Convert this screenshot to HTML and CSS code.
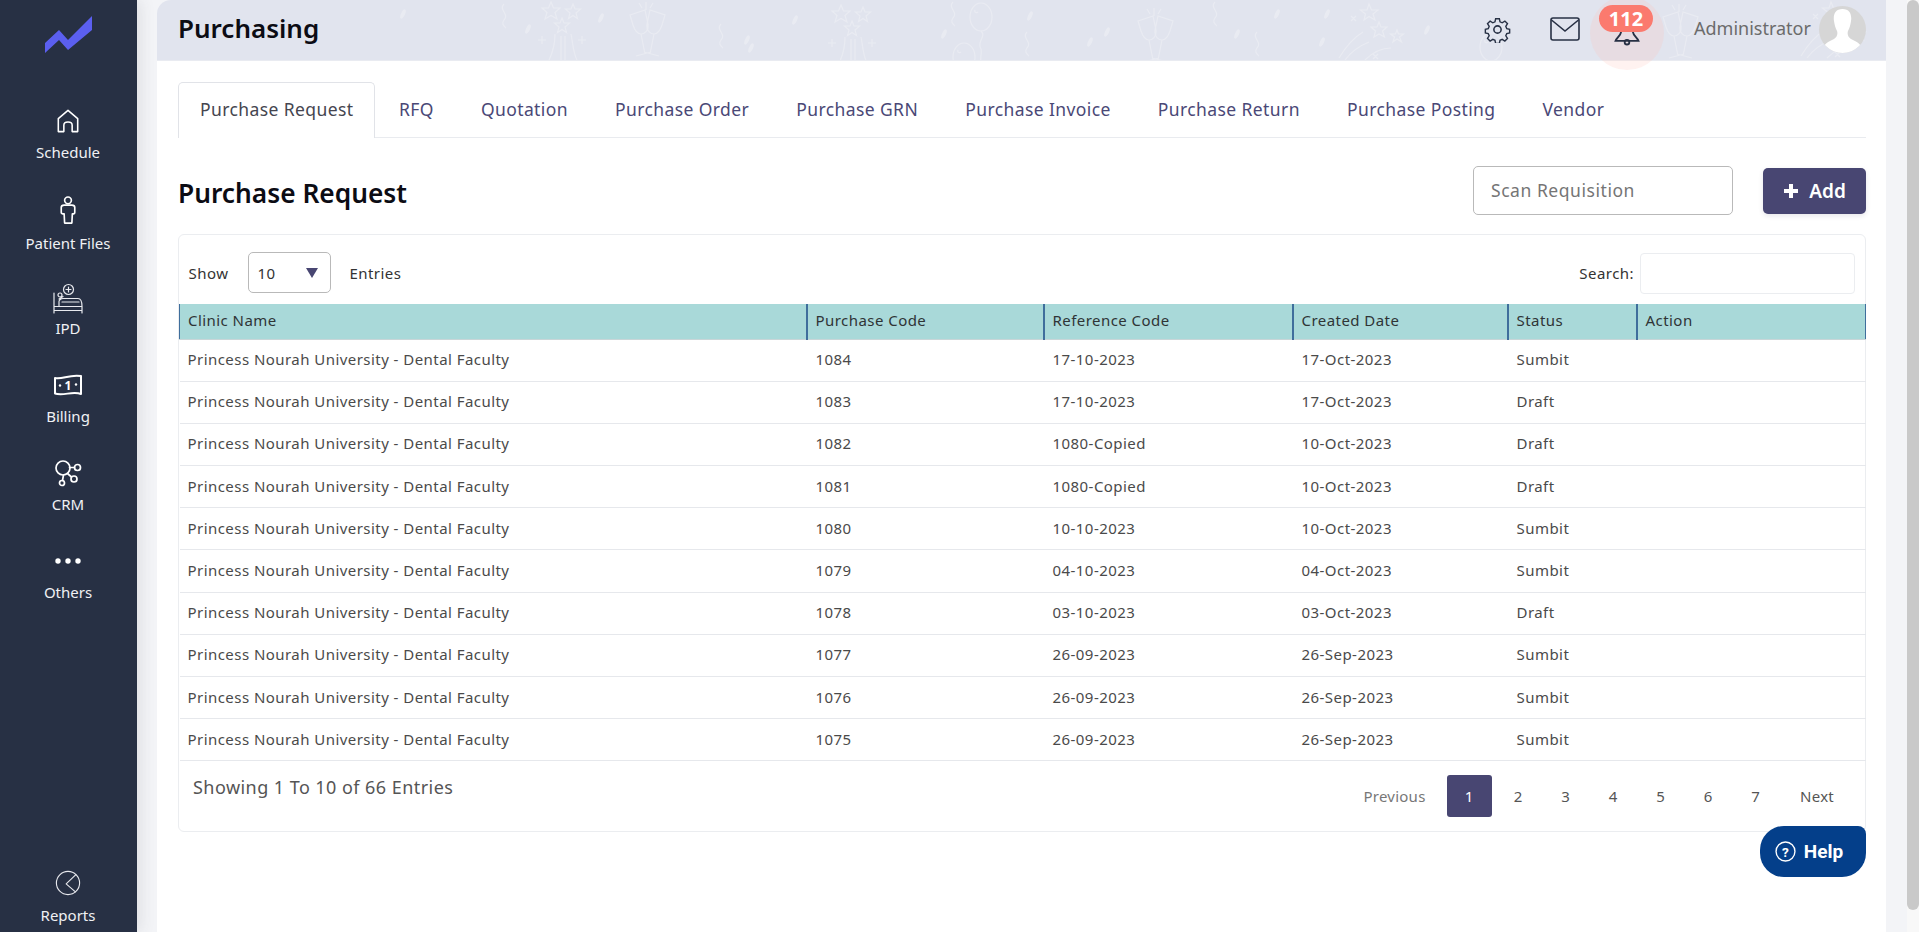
FILE: index.html
```html
<!DOCTYPE html>
<html lang="en">
<head>
<meta charset="utf-8">
<title>Purchasing</title>
<link rel="stylesheet" href="styles.css">
</head>
<body>
<aside class="sidebar">
  <svg class="logo" viewBox="0 0 47 37"><path d="M0 27L14 14L23 24L47 0V14L23 34L14 24L0 37Z" fill="#5b5ff0"/></svg>
  <nav class="side-nav">
    <a class="side-item item-home">
      <svg class="side-icon" viewBox="0 0 26 26"><path d="M2.500 24.500V10.500L13 1.500L23.500 10.500V24.500H17.500V17.500C17.500 13 8.500 13 8.500 17.500V24.500Z"/></svg>
      <span>Schedule</span>
    </a>
    <a class="side-item item-patient">
      <svg class="side-icon tall" viewBox="0 0 18 30"><circle cx="9" cy="4.500" r="3.500"/><path d="M2 12C2 10 3.500 9.500 5 9.500H13C14.500 9.500 16 10 16 12V17C16 18.500 14.500 18.500 13.500 18.500L13 28H5.500L5 18.500C3.500 18.500 2 18.500 2 17Z"/></svg>
      <span>Patient Files</span>
    </a>
    <a class="side-item item-ipd">
      <svg class="side-icon ipd-icon thin" viewBox="0 0 30 30"><circle cx="15.500" cy="5.500" r="5"/><path d="M15.500 3V8M13 5.500H18"/><circle cx="7" cy="11" r="2"/><path d="M1 9V29M29 22V29M1 26.500H29M1 22.500H29M6 22.500V17.500C6 16 8 14.500 10 14.500H25C27.500 14.500 29 18 29 22.500M9 18H26M6 15L10 12.500"/></svg>
      <span>IPD</span>
    </a>
    <a class="side-item">
      <svg class="side-icon wide bill-icon" viewBox="0 0 28 20"><path d="M1 3C8 5 15 -1 27 1V19C19 16 9 21 1 18.500Z"/><text class="bill-one" x="14" y="14.500">1</text><circle class="dot" cx="6" cy="10.500" r="1.200"/><circle class="dot" cx="22" cy="9.500" r="1.200"/></svg>
      <span>Billing</span>
    </a>
    <a class="side-item">
      <svg class="side-icon wide" viewBox="0 0 28 26"><circle cx="9" cy="8" r="7"/><circle cx="23.500" cy="7.500" r="3"/><circle cx="20" cy="19" r="3"/><circle cx="8" cy="23" r="2.500"/><path d="M15.500 7.500H20.500M13.500 13.500L17.500 17M9.500 15L8.500 20.500"/></svg>
      <span>CRM</span>
    </a>
    <a class="side-item">
      <svg class="side-icon wide" viewBox="0 0 26 26"><circle class="dot" cx="3" cy="13" r="2.700"/><circle class="dot" cx="13" cy="13" r="2.700"/><circle class="dot" cx="23" cy="13" r="2.700"/></svg>
      <span>Others</span>
    </a>
    <a class="side-item item-reports">
      <svg class="side-icon wide thin" viewBox="0 0 28 28"><circle cx="14" cy="14" r="12.500"/><path d="M22.500 5L12 15L22 23.500"/></svg>
      <span>Reports</span>
    </a>
  </nav>
</aside>

<div class="page">
  <header class="topbar">
    <svg class="decor" viewBox="0 0 1729 60">
      <defs>
        <g id="fw"><path d="M14 2l2.500 6h6.500l-5 4.500 2 6.500-6-3.500-6 3.500 2-6.500-5-4.500h6.500zM36 4l2 5h5.500l-4.500 4 1.500 5.500-4.500-3-4.500 3 1.500-5.500-4.500-4h5.500zM25 18l2 5h5.500l-4.500 4 1.500 5.500-4.500-3-4.500 3 1.500-5.500-4.500-4h5.500zM24 36v24M28 36v24M18 34c0 10-2 18-6 26M34 34c2 10 2 18 6 26M1 40h8M5 36v8M41 40h8M45 36v8"/></g>
        <g id="gl"><path d="M3 13l15-5 3 14c1 7-4 10-7 10s-6-3-8-9zM14 32l4 20M9 54l15-4M23 8l15 5-3 10c-2 6-5 9-8 9s-8-3-7-10zM27 32l-4 20M17 50l15 4M19 8V0M15 6l-3-5M23 6l3-5"/></g>
        <g id="co"><ellipse cx="0" cy="0" rx="2" ry="5" transform="rotate(25)" class="fill"/></g>
        <g id="sq"><path d="M4 0c-6 6 6 10 0 16c-3 4 0 6 2 8"/></g>
        <g id="ba"><ellipse cx="12" cy="15" rx="11" ry="14"/><path d="M12 29c6 6-5 10 0 18c1 4-1 8 0 14"/><path d="M6 8c-1 3 2 3 3 2"/></g>
        <g id="sh"><path d="M34 4l2.500 6h6.500l-5 4 2 6-6-3.500-5 3.500 1.500-6-5-4h6.500zM44 22l2 5h6l-4.500 4 2 6-5.500-3-5 3 1.500-6-4.500-4h6zM62 30l1.500 4h5l-4 3 2 5-4.500-3-4 3 1.500-5-4-3h5zM4 58c6-10 14-20 24-26M10 60c6-8 14-14 24-18M30 60c8-8 16-12 26-12M16 16l5 5M21 16l-5 5M38 54l5 5M43 54l-5 5"/></g>
      </defs>
      <g class="decor-lines">
        <use href="#sq" x="343" y="4"/><use href="#fw" x="380" y="0"/><use href="#gl" x="470" y="2"/><use href="#sq" x="560" y="24"/>
        <use href="#fw" x="670" y="3"/><use href="#sq" x="792" y="2"/><use href="#ba" x="812" y="2"/><use href="#ba" x="795" y="42"/>
        <use href="#sq" x="866" y="32"/><use href="#gl" x="978" y="8"/><use href="#sq" x="1054" y="2"/><use href="#sq" x="1096" y="32"/>
        <use href="#sh" x="1178" y="0"/><use href="#gl" x="1503" y="4"/><use href="#sh" x="1640" y="-2"/>
        <use href="#ba" x="1322" y="32"/>
      </g>
      <g class="decor-fill">
        <use href="#co" x="371" y="29"/><use href="#co" x="246" y="14"/><use href="#co" x="444" y="18"/><use href="#co" x="590" y="40"/>
        <use href="#co" x="594" y="48"/><use href="#co" x="638" y="20"/><use href="#co" x="787" y="34"/><use href="#co" x="873" y="16"/>
        <use href="#co" x="933" y="42"/><use href="#co" x="950" y="32"/><use href="#co" x="1080" y="34"/><use href="#co" x="1120" y="14"/>
        <use href="#co" x="1170" y="14"/><use href="#co" x="1165" y="42"/><use href="#co" x="1270" y="30"/><use href="#co" x="1470" y="18"/>
      </g>
    </svg>
    <h1 class="page-title">Purchasing</h1>
    <div class="top-actions">
      <svg class="top-icon gear" viewBox="0 0 26 26"><circle cx="13" cy="13" r="3.500"/><path d="M11 1.500h4l.7 3.300 2.300 1 2.900-1.800 2.800 2.800-1.800 2.900 1 2.300 3.100.7v4l-3.100.7-1 2.300 1.800 2.900-2.800 2.800-2.900-1.800-2.300 1-.7 3.300h-4l-.7-3.300-2.300-1-2.900 1.800-2.800-2.800 1.800-2.900-1-2.300-3.100-.7v-4l3.100-.7 1-2.300-1.800-2.900 2.800-2.800 2.900 1.800 2.300-1z" transform="translate(1.300 1.300) scale(.9)"/></svg>
      <svg class="top-icon mail" viewBox="0 0 30 24"><rect x="1" y="1" width="28" height="22" rx="2"/><path d="M1.500 3L15 14L28.500 3"/></svg>
      <div class="bell-wrap">
        <svg class="bell" viewBox="0 0 28 24"><path d="M14 0C8 0 8 6 7.500 11C7 15 3 17 1.500 20.500H26.500C25 17 21 15 20.500 11C20 6 20 0 14 0Z"/><circle cx="14" cy="22" r="2.500"/></svg>
        <span class="badge">112</span>
      </div>
      <span class="user-name">Administrator</span>
      <div class="avatar">
        <svg viewBox="0 0 47 47"><path d="M23.500 3C16 3 14 9 15 15C15.500 19 16.500 22 18 25C19 28 18 31 15 33C11 35 7 36 4 42C10 49 37 49 43 42C40 36 36 35 32 33C29 31 28 28 29 25C30.500 22 31.500 19 32 15C33 9 31 3 23.500 3Z"/></svg>
      </div>
    </div>
  </header>

  <main class="content">
    <ul class="tabs">
      <li class="tab active">Purchase Request</li>
      <li class="tab">RFQ</li>
      <li class="tab">Quotation</li>
      <li class="tab">Purchase Order</li>
      <li class="tab">Purchase GRN</li>
      <li class="tab">Purchase Invoice</li>
      <li class="tab">Purchase Return</li>
      <li class="tab">Purchase Posting</li>
      <li class="tab">Vendor</li>
    </ul>

    <div class="section-head">
      <h2 class="section-title">Purchase Request</h2>
      <input class="scan" type="text" placeholder="Scan Requisition">
      <button class="add-btn"><svg viewBox="0 0 16 16"><path d="M6 1h4v5h5v4h-5v5H6v-5H1V6h5z"/></svg>Add</button>
    </div>

    <section class="card">
      <div class="card-top">
        <span>Show</span>
        <div class="select"><span>10</span><i class="caret"></i></div>
        <span class="entries">Entries</span>
        <label class="search-label">Search:</label>
        <input class="search" type="text">
      </div>
      <table class="grid">
        <colgroup><col class="c1"><col class="c2"><col class="c3"><col class="c4"><col class="c5"><col class="c6"></colgroup>
        <thead>
          <tr><th>Clinic Name</th><th>Purchase Code</th><th>Reference Code</th><th>Created Date</th><th>Status</th><th>Action</th></tr>
        </thead>
        <tbody>
          <tr><td class="clinic">Princess Nourah University - Dental Faculty</td><td>1084</td><td>17-10-2023</td><td>17-Oct-2023</td><td>Sumbit</td><td></td></tr>
          <tr><td class="clinic">Princess Nourah University - Dental Faculty</td><td>1083</td><td>17-10-2023</td><td>17-Oct-2023</td><td>Draft</td><td></td></tr>
          <tr><td class="clinic">Princess Nourah University - Dental Faculty</td><td>1082</td><td>1080-Copied</td><td>10-Oct-2023</td><td>Draft</td><td></td></tr>
          <tr><td class="clinic">Princess Nourah University - Dental Faculty</td><td>1081</td><td>1080-Copied</td><td>10-Oct-2023</td><td>Draft</td><td></td></tr>
          <tr><td class="clinic">Princess Nourah University - Dental Faculty</td><td>1080</td><td>10-10-2023</td><td>10-Oct-2023</td><td>Sumbit</td><td></td></tr>
          <tr><td class="clinic">Princess Nourah University - Dental Faculty</td><td>1079</td><td>04-10-2023</td><td>04-Oct-2023</td><td>Sumbit</td><td></td></tr>
          <tr><td class="clinic">Princess Nourah University - Dental Faculty</td><td>1078</td><td>03-10-2023</td><td>03-Oct-2023</td><td>Draft</td><td></td></tr>
          <tr><td class="clinic">Princess Nourah University - Dental Faculty</td><td>1077</td><td>26-09-2023</td><td>26-Sep-2023</td><td>Sumbit</td><td></td></tr>
          <tr><td class="clinic">Princess Nourah University - Dental Faculty</td><td>1076</td><td>26-09-2023</td><td>26-Sep-2023</td><td>Sumbit</td><td></td></tr>
          <tr><td class="clinic">Princess Nourah University - Dental Faculty</td><td>1075</td><td>26-09-2023</td><td>26-Sep-2023</td><td>Sumbit</td><td></td></tr>
        </tbody>
      </table>
      <div class="card-foot">
        <p class="showing">Showing 1 To 10 of 66 Entries</p>
        <div class="pager">
          <a class="pg prev">Previous</a>
          <a class="pg current">1</a>
          <a class="pg">2</a>
          <a class="pg">3</a>
          <a class="pg">4</a>
          <a class="pg">5</a>
          <a class="pg">6</a>
          <a class="pg">7</a>
          <a class="pg next">Next</a>
        </div>
      </div>
    </section>
    <button class="help"><svg viewBox="0 0 20 20"><circle cx="10" cy="10" r="9"/><text x="10" y="14.800">?</text></svg>Help</button>
  </main>
</div>

<div class="scrollbar"><div class="thumb"></div></div>
</body>
</html>
```

FILE: styles.css
```css
* { box-sizing: border-box; }
html, body { height: 100%; }
body {
  margin: 0;
  height: 932px;
  overflow: hidden;
  display: flex;
  background: #f3f4f7;
  font-family: "Noto Sans", "Open Sans", sans-serif;
  color: #3c3c3c;
}

/* Sidebar */
.sidebar {
  width: 137px;
  flex: none;
  padding-right: 1px;
  background: #273044;
  box-shadow: 4px 0 14px rgba(60, 60, 70, .10);
  display: flex;
  flex-direction: column;
  align-items: center;
  position: relative;
}
.logo { width: 47px; height: 37px; margin-top: 16px; flex: none; }
.side-nav {
  flex: 1;
  width: 100%;
  display: flex;
  flex-direction: column;
  align-items: center;
  padding-top: 55px;
}
.side-item {
  display: flex;
  flex-direction: column;
  align-items: center;
  color: #f0f1f4;
  font-size: 15px;
  line-height: 20px;
  height: 88px;
}
.item-home { height: 91px; }
.item-patient { height: 86px; }
.item-ipd { height: 87px; }
.item-reports { margin-top: auto; height: 62px; }
.item-reports .side-icon { margin-bottom: 9px; }
.side-icon {
  width: 24px;
  height: 26px;
  margin-bottom: 8px;
  fill: none;
  stroke: #fff;
  stroke-width: 1.700;
  stroke-linejoin: round;
  stroke-linecap: round;
  overflow: visible;
}
.side-icon.tall { height: 29px; margin-top: -3px; margin-bottom: 8px; }
.side-icon.wide { width: 28px; }
.side-icon.ipd-icon { width: 30px; height: 30px; margin-top: -1px; margin-bottom: 4px; }
.side-icon.bill-icon { stroke-width: 2; }
.side-icon.thin { stroke-width: 1.200; stroke: #e8e9ee; }
.side-icon .dot { fill: #fff; stroke: none; }
.bill-one {
  font: 700 12px "Noto Sans", sans-serif;
  fill: #fff;
  stroke: none;
  text-anchor: middle;
}

/* Page column */
.page {
  width: 1729px;
  margin-left: 20px;
  flex: none;
  display: flex;
  flex-direction: column;
  height: 932px;
}
.topbar {
  height: 61px;
  flex: none;
  background: #e1e4ee;
  border-bottom: 1px solid #e9ebf1;
  border-top-left-radius: 14px;
  display: flex;
  align-items: center;
  padding: 0 20px 0 21px;
  position: relative;
  z-index: 1;
}
.decor { position: absolute; left: 0; top: 0; width: 1729px; height: 60px; }
.decor-lines { fill: none; stroke: #e9ebf2; stroke-width: 1.200; }
.decor-fill { fill: #e9ebf2; }
.page-title {
  position: relative;
  margin: 0;
  font-size: 26px;
  font-weight: 600;
  color: #0c0c14;
  line-height: 1;
  margin-top: -4px;
}
.top-actions {
  position: relative;
  margin-left: auto;
  display: flex;
  align-items: center;
}
.top-icon { fill: none; stroke: #273044; flex: none; }
.gear { width: 27px; height: 27px; stroke-width: 1.500; margin-right: 39px; margin-top: -2px; }
.mail { width: 30px; height: 24px; stroke-width: 1.600; margin-top: -2px; }
.bell-wrap {
  width: 74px;
  height: 74px;
  margin: 0 30px 0 10px;
  border-radius: 50%;
  background: rgba(255, 190, 180, .2);
  position: relative;
  flex: none;
  top: 3px;
}
.bell {
  position: absolute;
  left: 24px;
  top: 26px;
  width: 26px;
  height: 22px;
  fill: none;
  stroke: #273044;
  stroke-width: 2;
  overflow: visible;
}
.badge {
  position: absolute;
  left: 9px;
  top: 9px;
  width: 54px;
  height: 27px;
  border-radius: 14px;
  background: #fb7a6e;
  color: #fff;
  font: 700 20px/27px "Open Sans", sans-serif;
  text-align: center;
}
.user-name {
  font-size: 18px;
  color: #6b6b6b;
  margin-right: 6px;
  margin-top: -5px;
  width: 119px;
  white-space: nowrap;
}
.avatar {
  width: 47px;
  height: 47px;
  border-radius: 50%;
  background: #d6d6d6;
  overflow: hidden;
  flex: none;
  margin-top: -2px;
}
.avatar svg { display: block; width: 47px; height: 47px; fill: #fff; }

/* Content */
.content {
  flex: 1;
  background: #fff;
  padding: 21px 20px 0 21px;
  position: relative;
}
.tabs {
  list-style: none;
  margin: 0;
  padding: 0;
  display: flex;
  height: 56px;
  border-bottom: 1px solid #e9ebef;
}
.tab {
  height: 56px;
  padding: 0 22.550px;
  font-size: 17.500px;
  letter-spacing: .4px;
  line-height: 52px;
  color: #4a4876;
  white-space: nowrap;
  border: 1px solid transparent;
  border-bottom: 0;
}
.tab.active {
  color: #45454f;
  background: #fff;
  border-color: #e1e3e8;
  border-radius: 5px 5px 0 0;
  padding: 0 21px;
}
.section-head {
  display: flex;
  align-items: center;
  height: 96px;
  padding-top: 9px;
}
.section-title {
  margin: 5px auto 0 0;
  font-size: 26.300px;
  font-weight: 600;
  color: #0c0c14;
}
.scan {
  width: 260px;
  height: 49px;
  border: 1px solid #b9b9b9;
  border-radius: 5px;
  padding: 0 17px;
  font: 17.500px "Noto Sans", sans-serif;
  letter-spacing: .55px;
  margin-right: 30px;
  margin-bottom: 1px;
  outline: none;
}
.scan::placeholder { color: #757575; opacity: 1; }
.add-btn {
  width: 103px;
  height: 46px;
  background: #484672;
  color: #fff;
  border: 0;
  border-radius: 5px;
  font: 600 19px "Noto Sans", sans-serif;
  display: flex;
  align-items: center;
  justify-content: center;
  gap: 10px;
  box-shadow: 0 2px 5px rgba(60, 60, 90, .12);
}
.add-btn svg { width: 16px; height: 16px; fill: #fff; }

/* Card */
.card {
  border: 1px solid #ebedf0;
  border-radius: 6px;
  height: 598px;
  position: relative;
}
.card-top {
  height: 69px;
  display: flex;
  align-items: center;
  padding: 6px 10px 0 9.500px;
  font-size: 15px;
  letter-spacing: .45px;
  color: #333;
}
.select {
  width: 83px;
  height: 41px;
  border: 1px solid #b9b9b9;
  border-radius: 5px;
  margin: 0 18px 0 20px;
  display: flex;
  align-items: center;
  justify-content: space-between;
  padding: 0 12px 0 8px;
}
.caret {
  width: 0;
  height: 0;
  border-left: 6.500px solid transparent;
  border-right: 6.500px solid transparent;
  border-top: 10px solid #484672;
}
.search-label { margin-left: auto; margin-right: 6px; }
.search {
  width: 215px;
  height: 41px;
  border: 1px solid #ebedf0;
  border-radius: 4px;
  outline: none;
  margin-top: 1px;
}
.grid {
  width: 1686px;
  border-collapse: collapse;
  table-layout: fixed;
  font-size: 15px;
  letter-spacing: .45px;
}
.c1 { width: 627px; }
.c2 { width: 237px; }
.c3 { width: 249px; }
.c4 { width: 215px; }
.c5 { width: 129px; }
.c6 { width: 229px; }
.grid th {
  height: 35px;
  background: #a9d9d9;
  font-weight: 400;
  text-align: left;
  padding: 0 8px 2px;
  color: #2f3436;
  border-left: 2px solid #3f6e9c;
  border-bottom: 1px solid #c9d6d8;
}
.grid th:first-child { border-left-width: 1px; }
.grid th:last-child { border-right: 1px solid #3f6e9c; }
.grid td {
  height: 42.200px;
  padding: 0 9px 2px;
  color: #4a4a4a;
  border-bottom: 1px solid #e6e8ec;
}
.grid td.clinic { padding-left: 8px; }
.card-foot {
  display: flex;
  justify-content: space-between;
  padding: 0 19px 0 14px;
}
.showing { margin: 14px 0 0; font-size: 18px; letter-spacing: .45px; color: #555; }
.pager {
  display: flex;
  align-items: center;
  margin-top: 14px;
  height: 42px;
  font-size: 15px;
  color: #555;
}
.pg {
  width: 37px;
  margin-left: 10.500px;
  height: 42px;
  line-height: 42px;
  text-align: center;
  border-radius: 3px;
}
.pg.prev { width: auto; margin-left: 0; margin-right: 21px; color: #777; letter-spacing: .25px; }
.pg.next { width: auto; margin-left: 26px; margin-right: 12px; letter-spacing: .25px; }
.pg.current { width: 45px; margin-left: 0; margin-right: -2.500px; background: #484672; color: #fff; }
.help {
  position: absolute;
  right: 20px;
  top: 765px;
  width: 106px;
  height: 51px;
  padding: 0 8px 0 0;
  background: #043f8a;
  color: #fff;
  border: 0;
  border-radius: 24px 8px 24px 24px;
  font: 700 19px Roboto, sans-serif;
  display: flex;
  align-items: center;
  justify-content: center;
  gap: 8px;
}
.help svg { width: 21px; height: 21px; fill: none; stroke: #fff; stroke-width: 1.300; }
.help text { font: 700 13px Roboto, sans-serif; fill: #fff; stroke: none; text-anchor: middle; }

/* Scrollbar */
.scrollbar {
  width: 12px;
  margin-left: 21px;
  height: 932px;
  flex: none;
  background: #f8f8f8;
}
.thumb { height: 910px; background: #c9c9c9; border-radius: 6px; }
```
